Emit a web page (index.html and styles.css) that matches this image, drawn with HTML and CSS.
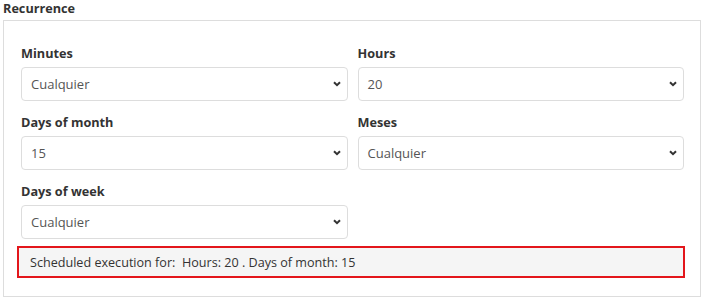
FILE: index.html
```html
<!DOCTYPE html>
<html>
<head>
<meta charset="utf-8">
<link rel="stylesheet" href="styles.css">
</head>
<body>
<div class="wrap">
  <div class="title">Recurrence</div>
  <div class="panel">
    <div class="grid">
      <div class="field">
        <div class="label">Minutes</div>
        <div class="select"><span>Cualquier</span><svg class="chev" width="8" height="6" viewBox="0 0 8 6"><path d="M1 1.2 L4 4.2 L7 1.2" fill="none" stroke="#333" stroke-width="2"/></svg></div>
      </div>
      <div class="field">
        <div class="label">Hours</div>
        <div class="select"><span>20</span><svg class="chev" width="8" height="6" viewBox="0 0 8 6"><path d="M1 1.2 L4 4.2 L7 1.2" fill="none" stroke="#333" stroke-width="2"/></svg></div>
      </div>
      <div class="field">
        <div class="label">Days of month</div>
        <div class="select"><span>15</span><svg class="chev" width="8" height="6" viewBox="0 0 8 6"><path d="M1 1.2 L4 4.2 L7 1.2" fill="none" stroke="#333" stroke-width="2"/></svg></div>
      </div>
      <div class="field">
        <div class="label">Meses</div>
        <div class="select"><span>Cualquier</span><svg class="chev" width="8" height="6" viewBox="0 0 8 6"><path d="M1 1.2 L4 4.2 L7 1.2" fill="none" stroke="#333" stroke-width="2"/></svg></div>
      </div>
      <div class="field">
        <div class="label">Days of week</div>
        <div class="select"><span>Cualquier</span><svg class="chev" width="8" height="6" viewBox="0 0 8 6"><path d="M1 1.2 L4 4.2 L7 1.2" fill="none" stroke="#333" stroke-width="2"/></svg></div>
      </div>
    </div>
    <div class="summary">Scheduled execution for:&nbsp; Hours: 20 . Days of month: 15</div>
  </div>
</div>
</body>
</html>
```
FILE: styles.css
```css
html, body {
  margin: 0;
  padding: 0;
  background: #fff;
}
body {
  font-family: "Open Sans", "Noto Sans", sans-serif;
  font-size: 13px;
  color: #333;
}
.wrap {
  width: 698px;
  margin-left: 3px;
}
.title {
  font-weight: 700;
  font-size: 12.7px;
  line-height: 16px;
  margin-bottom: 4px;
  color: #333;
}
.panel {
  border: 1px solid #ddd;
  padding: 22px 16px 17px 17px;
  height: 277px;
  box-sizing: border-box;
}
.grid {
  display: grid;
  grid-template-columns: 1fr 1fr;
  column-gap: 10px;
  row-gap: 11px;
}
.label {
  font-weight: 700;
  font-size: 12.7px;
  line-height: 20px;
  margin-bottom: 4px;
}
.select {
  height: 34px;
  box-sizing: border-box;
  border: 1px solid #ddd;
  border-radius: 4px;
  display: flex;
  align-items: center;
  justify-content: space-between;
  padding: 0 6px 0 9px;
  color: #555;
}
.chev {
  display: block;
}
.summary {
  margin: 7px -1px 0 -4px;
  height: 32px;
  box-sizing: border-box;
  border: 2px solid #e3161b;
  background: #f5f5f5;
  display: flex;
  align-items: center;
  padding-left: 11px;
  font-size: 12.6px;
  color: #333;
}
```
